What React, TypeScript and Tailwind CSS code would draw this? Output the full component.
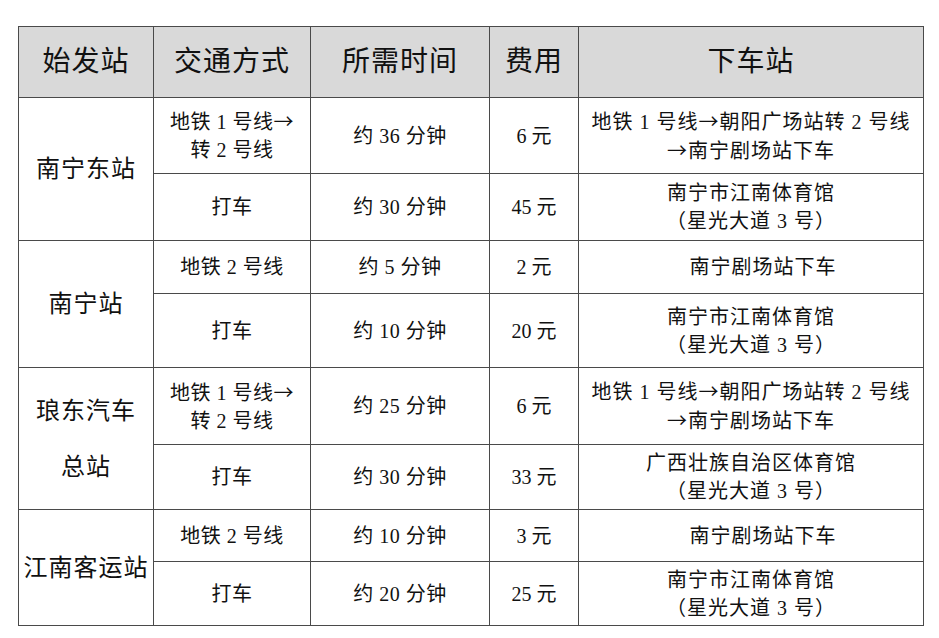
import type { ReactNode } from 'react'

const FONT = 'font-["Liberation_Serif","Noto_Sans_CJK_SC",serif]'

const cell = 'border border-[#4a4a4a] text-center align-middle p-0'

const Arrow = () => <span className='font-["Noto_Sans_CJK_SC",sans-serif]'>→</span>

function Two({ a, b }: { a: ReactNode; b: ReactNode }) {
  return (
    <div className="leading-[28px]">
      <div>{a}</div>
      <div>{b}</div>
    </div>
  )
}

const STADIUM = <Two a="南宁市江南体育馆" b="（星光大道 3 号）" />
const METRO_TRANSFER = <Two a={<>地铁 1 号线<Arrow /></>} b="转 2 号线" />
const ROUTE_TRANSFER = (
  <Two a={<>地铁 1 号线<Arrow />朝阳广场站转 2 号线</>} b={<><Arrow />南宁剧场站下车</>} />
)

type Row = { h: number; mode: ReactNode; time: string; fee: string; stop: ReactNode; shift?: boolean }
type Group = { name: ReactNode; rows: Row[] }

const GROUPS: Group[] = [
  {
    name: '南宁东站',
    rows: [
      { h: 76, mode: METRO_TRANSFER, time: '约 36 分钟', fee: '6 元', stop: ROUTE_TRANSFER },
      { h: 67, mode: '打车', time: '约 30 分钟', fee: '45 元', stop: STADIUM },
    ],
  },
  {
    name: '南宁站',
    rows: [
      { h: 53, mode: '地铁 2 号线', time: '约 5 分钟', fee: '2 元', stop: '南宁剧场站下车', shift: true },
      { h: 74, mode: '打车', time: '约 10 分钟', fee: '20 元', stop: STADIUM },
    ],
  },
  {
    name: (
      <div className="leading-[56px]">
        琅东汽车
        <br />
        总站
      </div>
    ),
    rows: [
      { h: 77, mode: METRO_TRANSFER, time: '约 25 分钟', fee: '6 元', stop: ROUTE_TRANSFER },
      { h: 65, mode: '打车', time: '约 30 分钟', fee: '33 元', stop: <Two a="广西壮族自治区体育馆" b="（星光大道 3 号）" /> },
    ],
  },
  {
    name: '江南客运站',
    rows: [
      { h: 52, mode: '地铁 2 号线', time: '约 10 分钟', fee: '3 元', stop: '南宁剧场站下车', shift: true },
      { h: 64, mode: '打车', time: '约 20 分钟', fee: '25 元', stop: STADIUM },
    ],
  },
]

const HEADERS = ['始发站', '交通方式', '所需时间', '费用', '下车站']

export default function App() {
  return (
    <div className={`w-[939px] h-[638px] bg-white pt-[26px] pl-[18px] text-[#111] ${FONT}`}>
      <table className="table-fixed border-collapse w-[905px]">
        <colgroup>
          <col className="w-[135px]" />
          <col className="w-[157px]" />
          <col className="w-[179px]" />
          <col className="w-[89px]" />
          <col className="w-[345px]" />
        </colgroup>
        <thead>
          <tr className="h-[71px] bg-[#d9d9d9]">
            {HEADERS.map(h => (
              <th key={h} className={`${cell} text-[28px] font-normal tracking-[1px]`}>{h}</th>
            ))}
          </tr>
        </thead>
        <tbody className="text-[20px]">
          {GROUPS.map((g, gi) =>
            g.rows.map((r, ri) => (
              <tr key={`${gi}-${ri}`} style={{ height: r.h }}>
                {ri === 0 && (
                  <td rowSpan={g.rows.length} className={`${cell} text-[24px] tracking-[1px]`}>{g.name}</td>
                )}
                <td className={`${cell} tracking-[0.5px]`}>{r.mode}</td>
                <td className={`${cell} tracking-[0.5px]`}>{r.time}</td>
                <td className={cell}>{r.fee}</td>
                <td className={`${cell} tracking-[1px] ${r.shift ? 'pl-6' : ''}`}>{r.stop}</td>
              </tr>
            ))
          )}
        </tbody>
      </table>
    </div>
  )
}
